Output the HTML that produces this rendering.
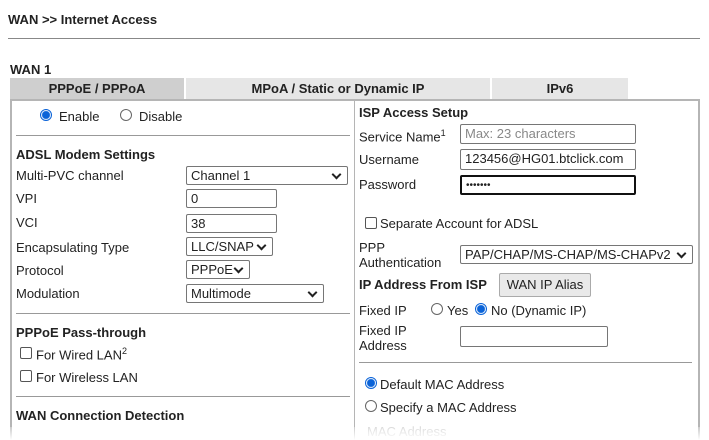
<!DOCTYPE html><html><head><style>
*{box-sizing:border-box;margin:0;padding:0}
html,body{width:709px;height:440px;overflow:hidden}
body{background:#fff;font-family:"Liberation Sans",Arial,sans-serif;font-size:13px;color:#222;position:relative}
.a{position:absolute;white-space:nowrap}
.b{font-weight:bold}
.t{position:absolute;top:78px;height:21px;font-weight:bold;text-align:center;line-height:21px;font-size:13px}
.in{position:absolute;border:1px solid #767676;border-radius:2px;background:#fff;padding-left:4px;line-height:17px;font-size:13px}
.sel:after{content:"";position:absolute;right:7px;top:4px;width:5px;height:5px;border-right:2px solid #222;border-bottom:2px solid #222;transform:rotate(45deg)}
.hr{position:absolute;height:1px;background:#999}
.r{position:absolute;width:12px;height:12px;border:1px solid #666;border-radius:50%;background:#fff}
.r.on{border:1px solid #0a63d8;background:radial-gradient(circle,#0a63d8 0 3.5px,#fff 4.5px)}
.c{position:absolute;width:12px;height:12px;border:1px solid #555;border-radius:2px;background:#fff}
</style></head><body>
<div class="a b" style="left:8px;top:12px">WAN &gt;&gt; Internet Access</div>
<div class="hr" style="left:8px;top:38px;width:692px;background:#888"></div>
<div class="a b" style="left:10px;top:62px">WAN 1</div>
<div class="t" style="left:10px;width:174px;background:#cfcfcf">PPPoE / PPPoA</div>
<div class="t" style="left:186px;width:304px;background:#e6e6e6">MPoA / Static or Dynamic IP</div>
<div class="t" style="left:492px;width:136px;background:#e6e6e6">IPv6</div>
<div style="position:absolute;left:10px;top:99px;width:690px;height:341px;border:2px solid #b5b5b5;border-bottom:none"></div>
<div style="position:absolute;left:354px;top:101px;width:1px;height:339px;background:#b5b5b5"></div>

<div class="r on" style="left:40px;top:109px"></div><div class="a" style="left:59px;top:109px">Enable</div>
<div class="r" style="left:120px;top:109px"></div><div class="a" style="left:139px;top:109px">Disable</div>
<div class="hr" style="left:16px;top:135px;width:334px"></div>
<div class="a b" style="left:16px;top:147px">ADSL Modem Settings</div>
<div class="a" style="left:16px;top:168px">Multi-PVC channel</div>
<div class="in sel" style="left:186px;top:166px;width:162px;height:19px">Channel 1</div>
<div class="a" style="left:16px;top:191px">VPI</div>
<div class="in" style="left:186px;top:189px;width:91px;height:19px">0</div>
<div class="a" style="left:16px;top:215px">VCI</div>
<div class="in" style="left:186px;top:214px;width:91px;height:19px">38</div>
<div class="a" style="left:16px;top:240px">Encapsulating Type</div>
<div class="in sel" style="left:186px;top:237px;width:87px;height:19px">LLC/SNAP</div>
<div class="a" style="left:16px;top:263px">Protocol</div>
<div class="in sel" style="left:186px;top:260px;width:64px;height:19px">PPPoE</div>
<div class="a" style="left:16px;top:286px">Modulation</div>
<div class="in sel" style="left:186px;top:284px;width:138px;height:19px">Multimode</div>
<div class="hr" style="left:16px;top:313px;width:334px"></div>
<div class="a b" style="left:16px;top:325px">PPPoE Pass-through</div>
<div class="c" style="left:20px;top:347px"></div><div class="a" style="left:36px;top:346px">For Wired LAN<sup style="font-size:9px">2</sup></div>
<div class="c" style="left:20px;top:370px"></div><div class="a" style="left:36px;top:370px">For Wireless LAN</div>
<div class="hr" style="left:16px;top:396px;width:334px"></div>
<div class="a b" style="left:16px;top:408px">WAN Connection Detection</div>

<div class="a b" style="left:359px;top:105px">ISP Access Setup</div>
<div class="a" style="left:359px;top:128px">Service Name<sup style="font-size:9px">1</sup></div>
<div class="in" style="left:460px;top:124px;width:176px;height:20px;color:#888">Max: 23 characters</div>
<div class="a" style="left:359px;top:152px">Username</div>
<div class="in" style="left:460px;top:149px;width:176px;height:21px">123456@HG01.btclick.com</div>
<div class="a" style="left:359px;top:177px">Password</div>
<div class="in" style="left:460px;top:175px;width:176px;height:20px;border:2px solid #111;font-size:10px">•••••••</div>
<div class="c" style="left:365px;top:217px"></div><div class="a" style="left:380px;top:216px">Separate Account for ADSL</div>
<div class="a" style="left:359px;top:240px;line-height:15px">PPP<br>Authentication</div>
<div class="in sel" style="left:460px;top:245px;width:233px;height:19px">PAP/CHAP/MS-CHAP/MS-CHAPv2</div>
<div class="a b" style="left:359px;top:277px">IP Address From ISP</div>
<div class="a" style="left:499px;top:273px;width:92px;height:24px;border:1px solid #aaa;border-radius:2px;background:#e9e9e9;text-align:center;line-height:22px">WAN IP Alias</div>
<div class="a" style="left:359px;top:303px">Fixed IP</div>
<div class="r" style="left:431px;top:303px"></div><div class="a" style="left:447px;top:303px">Yes</div>
<div class="r on" style="left:475px;top:303px"></div><div class="a" style="left:491px;top:303px">No (Dynamic IP)</div>
<div class="a" style="left:359px;top:323px;line-height:15px">Fixed IP<br>Address</div>
<div class="in" style="left:460px;top:326px;width:148px;height:21px"></div>
<div class="hr" style="left:359px;top:362px;width:333px"></div>
<div class="r on" style="left:365px;top:377px"></div><div class="a" style="left:380px;top:377px">Default MAC Address</div>
<div class="r" style="left:365px;top:400px"></div><div class="a" style="left:380px;top:400px">Specify a MAC Address</div>
<div class="a" style="left:367px;top:424px;color:#ccc">MAC Address</div>
<div style="position:absolute;left:0;top:427px;width:709px;height:13px;background:linear-gradient(rgba(255,255,255,0.3),#fff)"></div>
</body></html>
